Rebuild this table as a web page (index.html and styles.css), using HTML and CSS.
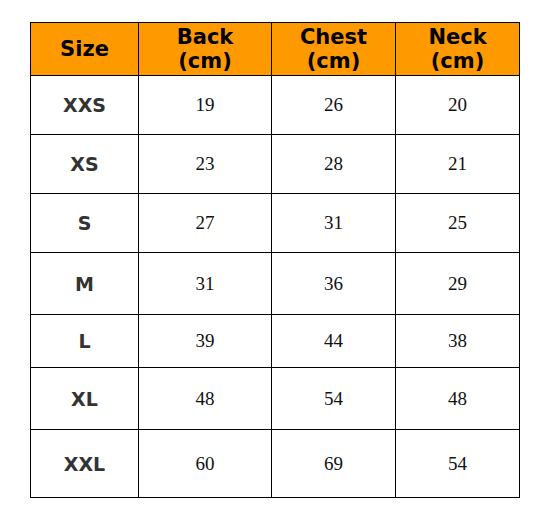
FILE: index.html
```html
<!DOCTYPE html>
<html>
<head>
<meta charset="utf-8">
<link rel="stylesheet" href="styles.css">
</head>
<body>
<table class="size-table">
  <colgroup>
    <col class="c1"><col class="c2"><col class="c3"><col class="c4">
  </colgroup>
  <thead>
    <tr class="head">
      <th>Size</th>
      <th>Back<br>(cm)</th>
      <th>Chest<br>(cm)</th>
      <th>Neck<br>(cm)</th>
    </tr>
  </thead>
  <tbody>
    <tr class="r59"><td class="sz">XXS</td><td>19</td><td>26</td><td>20</td></tr>
    <tr class="r59"><td class="sz">XS</td><td>23</td><td>28</td><td>21</td></tr>
    <tr class="r59"><td class="sz">S</td><td>27</td><td>31</td><td>25</td></tr>
    <tr class="r62"><td class="sz">M</td><td>31</td><td>36</td><td>29</td></tr>
    <tr class="r53"><td class="sz">L</td><td>39</td><td>44</td><td>38</td></tr>
    <tr class="r62"><td class="sz">XL</td><td>48</td><td>54</td><td>48</td></tr>
    <tr class="r68"><td class="sz">XXL</td><td>60</td><td>69</td><td>54</td></tr>
  </tbody>
</table>
</body>
</html>
```
FILE: styles.css
```css
html, body {
  margin: 0;
  background: #ffffff;
}
body {
  padding: 22px 0 0 30px;
}
.size-table {
  border-collapse: collapse;
  table-layout: fixed;
  width: 489px;
}
.c1 { width: 108px; }
.c2 { width: 133px; }
.c3 { width: 124px; }
.c4 { width: 124px; }
.size-table th,
.size-table td {
  border: 1px solid #000;
  padding: 0;
  text-align: center;
  vertical-align: middle;
}
.head { height: 53px; }
.head th {
  background: #ff9900;
  color: #000;
  font-family: "DejaVu Sans", Verdana, sans-serif;
  font-weight: bold;
  font-size: 21px;
  line-height: 24px;
}
.size-table td {
  font-family: "Liberation Serif", "Times New Roman", serif;
  font-size: 19px;
  color: #111;
}
.size-table td.sz {
  font-family: "DejaVu Sans", Verdana, sans-serif;
  font-weight: bold;
  font-size: 19px;
  color: #333;
}
.r53 { height: 53px; }
.r59 { height: 59px; }
.r62 { height: 62px; }
.r68 { height: 68px; }
```
